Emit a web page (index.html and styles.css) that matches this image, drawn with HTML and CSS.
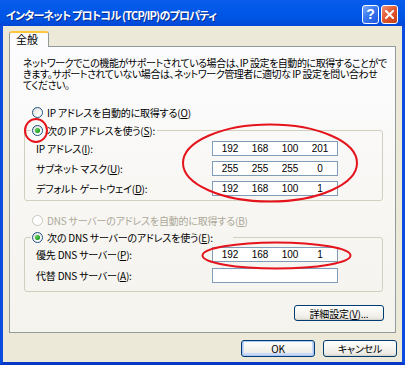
FILE: index.html
```html
<!DOCTYPE html>
<html lang="ja">
<head>
<meta charset="utf-8">
<title>インターネット プロトコル (TCP/IP)のプロパティ</title>
<link rel="stylesheet" href="styles.css">
</head>
<body>
<div class="window">
  <div class="titlebar">
    <span class="title">インターネット プロトコル (TCP/IP)のプロパティ</span>
    <div class="tbtns">
      <span class="tb help">?</span>
      <span class="tb close"><svg width="9" height="9" viewBox="0 0 9 9"><path d="M1 1L8 8M8 1L1 8" stroke="#fff" stroke-width="2" stroke-linecap="square"/></svg></span>
    </div>
  </div>
  <div class="frame">
    <div class="client">
      <div class="tabs"><div class="tab">全般</div></div>
      <div class="panel">
        <p class="desc"><span class="dl">ネットワークでこの機能がサポートされている場合は、IP 設定を自動的に取得することがで</span><span class="dl">きます。サポートされていない場合は、ネットワーク管理者に適切な IP 設定を問い合わせ</span><span class="dl">てください。</span></p>
        <div class="opt first"><span class="radio"></span><span class="lbl">IP アドレスを自動的に取得する(<u>O</u>)</span></div>
        <fieldset class="group g1">
          <legend><span class="opt"><span class="radio checked"></span><span class="lbl">次の IP アドレスを使う(<u>S</u>):</span></span></legend>
          <div class="field"><span class="flabel">IP アドレス(<u>I</u>):</span><div class="ipbox"><span>192</span><span>168</span><span>100</span><span>201</span></div></div>
          <div class="field"><span class="flabel">サブネット マスク(<u>U</u>):</span><div class="ipbox"><span>255</span><span>255</span><span>255</span><span>0</span></div></div>
          <div class="field"><span class="flabel">デフォルト ゲートウェイ(<u>D</u>):</span><div class="ipbox"><span>192</span><span>168</span><span>100</span><span>1</span></div></div>
        </fieldset>
        <div class="opt third disabled"><span class="radio"></span><span class="lbl">DNS サーバーのアドレスを自動的に取得する(<u>B</u>)</span></div>
        <fieldset class="group g2">
          <legend><span class="opt"><span class="radio checked"></span><span class="lbl">次の DNS サーバーのアドレスを使う(<u>E</u>):</span></span></legend>
          <div class="field"><span class="flabel">優先 DNS サーバー(<u>P</u>):</span><div class="ipbox"><span>192</span><span>168</span><span>100</span><span>1</span></div></div>
          <div class="field gap6"><span class="flabel">代替 DNS サーバー(<u>A</u>):</span><div class="ipbox"><span></span><span></span><span></span><span></span></div></div>
        </fieldset>
        <div class="advrow"><button class="btn adv">詳細設定(<u>V</u>)...</button></div>
      </div>
      <div class="actions">
        <button class="btn ok">OK</button>
        <button class="btn">キャンセル</button>
      </div>
    </div>
  </div>
  <svg class="annot" width="405" height="365" viewBox="0 0 405 365">
    <ellipse cx="36" cy="130.5" rx="11" ry="11.5" fill="none" stroke="#E5141C" stroke-width="2"/>
    <ellipse cx="270" cy="163" rx="87" ry="38.5" fill="none" stroke="#E5141C" stroke-width="2"/>
    <ellipse cx="276.5" cy="255.5" rx="74" ry="13" fill="none" stroke="#E5141C" stroke-width="2"/>
  </svg>
</div>
</body>
</html>
```
FILE: styles.css
```css
* { box-sizing: border-box; }
html, body { margin: 0; padding: 0; }
body {
  width: 405px;
  height: 365px;
  overflow: hidden;
  background: #fff;
  font-family: "Noto Sans CJK JP", sans-serif;
  font-size: 10px;
  font-feature-settings: "palt" 1;
  letter-spacing: -0.2px;
  color: #000;
}
.window {
  position: relative;
  width: 405px;
  height: 365px;
  display: flex;
  flex-direction: column;
}
.titlebar {
  height: 26px;
  flex: none;
  display: flex;
  align-items: center;
  justify-content: space-between;
  padding: 0 7px 0 6px;
  background: linear-gradient(to bottom, #0A5CEC 0%, #0058E9 40%, #0054E3 70%, #0046D6 100%);
}
.title {
  color: #fff;
  font-weight: bold;
  font-size: 11px;
  letter-spacing: -0.8px;
  line-height: 14px;
  margin-top: 3px;
  white-space: nowrap;
  text-shadow: 1px 1px 0 #0A2C8C;
}
.tbtns { display: flex; gap: 2px; margin-top: 2px; }
.tb {
  width: 17px;
  height: 19px;
  border: 1px solid #fff;
  border-radius: 3px;
  display: flex;
  align-items: center;
  justify-content: center;
}
.help {
  background: linear-gradient(135deg, #7BA8FA 0%, #3A77F0 45%, #2159E0 100%);
  color: #fff;
  font-family: "Liberation Sans", sans-serif;
  font-weight: bold;
  font-size: 14px;
  letter-spacing: 0;
  line-height: 1;
}
.close {
  background: linear-gradient(135deg, #F09478 0%, #E25A32 45%, #C83D14 100%);
}
.frame {
  flex: 1;
  border-style: solid;
  border-color: #0A4BE0;
  border-width: 0 3px 3px 3px;
  border-bottom-color: #0838C8;
}
.client {
  height: 100%;
  background: #ECE9D8;
  padding: 5px 5px 0 6px;
}
.tabs { display: flex; height: 15px; position: relative; z-index: 1; }
.tab {
  width: 40px;
  height: 16px;
  background: #FCFCFE;
  border: 1px solid #919B9C;
  border-bottom: none;
  border-top: 2px solid #FFC83C;
  border-radius: 3px 3px 0 0;
  padding-left: 6px;
  font-size: 11px;
  letter-spacing: 0;
  line-height: 13px;
}
.panel {
  width: 387px;
  height: 287px;
  border: 1px solid #919B9C;
  background: linear-gradient(to bottom, #FCFCFE 0%, #F7F6F2 60%, #F4F3EE 100%);
  display: flex;
  flex-direction: column;
}
.desc {
  margin: 10px 0 0 13px;
  display: flex;
  flex-direction: column;
  white-space: nowrap;
  letter-spacing: -0.45px;
}
.dl { display: block; height: 11px; line-height: 11px; }
.opt {
  display: flex;
  align-items: center;
  height: 13px;
  white-space: nowrap;
}
.opt.first { margin: 16px 0 0 22px; }
.opt.third { margin: 13px 0 0 22px; }
.radio {
  width: 11px;
  height: 11px;
  border-radius: 50%;
  border: 1px solid #1C5180;
  background: linear-gradient(135deg, #DCDCD5 0%, #F8F8F6 60%, #FFFFFF 100%);
  flex: none;
  position: relative;
  margin-right: 4px;
}
.radio.checked::after {
  content: "";
  position: absolute;
  left: 2px;
  top: 2px;
  width: 5px;
  height: 5px;
  border-radius: 50%;
  background: radial-gradient(circle at 35% 35%, #5FD35F 0%, #21A121 60%, #1A8A1A 100%);
}
.disabled { color: #ACA899; }
.disabled .radio { border-color: #CAC8BB; background: #fff; }
.lbl { line-height: 13px; }
.group {
  width: 359px;
  min-width: 0;
  margin: 5px 0 0 14px;
  padding: 4px 0 4px 0;
  border: 1px solid #D0D0BF;
  border-radius: 3px;
}
.g2 { margin-top: 4px; padding: 3px 0 8px 0; }
.group legend {
  padding: 0 2px 0 1px;
  margin-left: 6px;
  height: 13px;
}
.g2 legend { padding-right: 20px; }
.field {
  display: flex;
  align-items: center;
  height: 15px;
  padding-left: 11px;
}
.field + .field { margin-top: 5px; }
.field.gap6 { margin-top: 6px; }
.flabel { width: 176px; line-height: 13px; white-space: nowrap; }
.ipbox {
  width: 126px;
  height: 15px;
  border: 1px solid #7F9DB9;
  background: #fff;
  display: flex;
  padding: 0 2px;
  font-family: "Liberation Sans", sans-serif;
  font-size: 10px;
  letter-spacing: 0;
  font-feature-settings: normal;
}
.ipbox span {
  width: 30px;
  text-align: center;
  line-height: 13px;
}
.advrow {
  display: flex;
  justify-content: flex-end;
  margin: 13px 11px 0 0;
}
.btn {
  font-family: "Noto Sans CJK JP", sans-serif;
  font-feature-settings: "palt" 1;
  font-size: 10px;
  letter-spacing: -0.2px;
  color: #000;
  border: 1px solid #003C74;
  border-radius: 3px;
  background: linear-gradient(to bottom, #FFFFFF 0%, #F5F4EF 50%, #ECEBE6 85%, #D6D0C5 100%);
  padding: 0;
  margin: 0;
  line-height: 13px;
}
.adv { width: 90px; height: 16px; }
.actions {
  display: flex;
  justify-content: flex-end;
  gap: 8px;
  margin-top: 7px;
}
.actions .btn { width: 74px; height: 17px; }
.btn.ok { box-shadow: inset 0 0 0 1px #A9C6F5, inset 0 -1px 0 2px #C8DAF8; }
.annot {
  position: absolute;
  left: 0;
  top: 0;
  pointer-events: none;
}
```
